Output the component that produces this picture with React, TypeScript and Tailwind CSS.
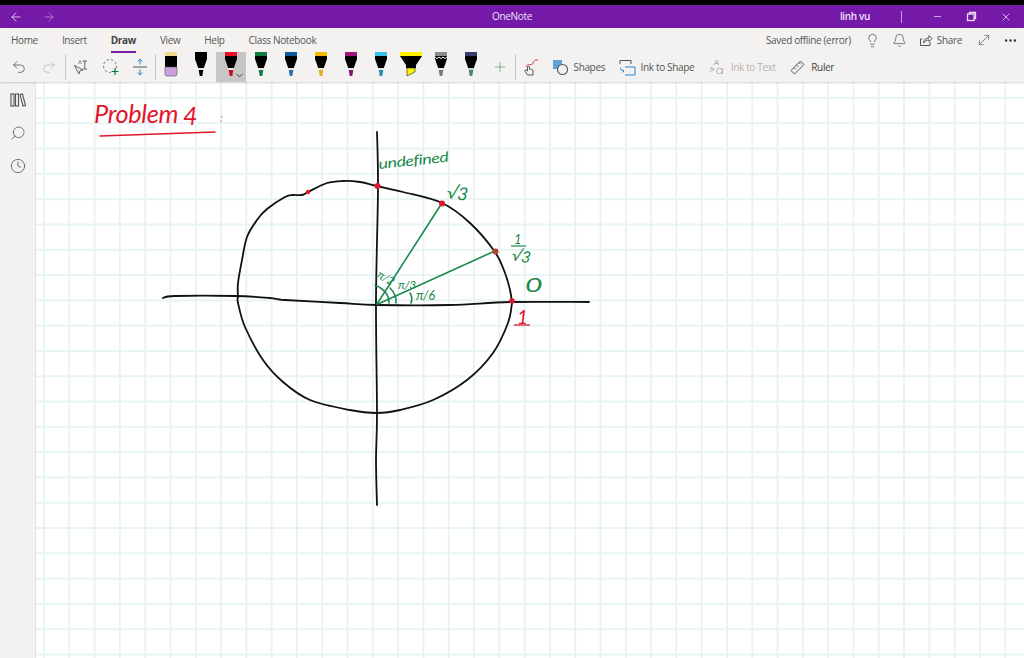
import React from "react";
import { ArrowLeft, ArrowRight, Minus, X, Undo2, Redo2, Lightbulb, Bell, Ellipsis, Plus, Search, Clock, ChevronDown, MoveDiagonal } from "lucide-react";

type PenProps = { cap: string; tip: string; band?: string; wide?: boolean; zig?: boolean; selected?: boolean };

function Pen({ cap, tip, band = "#e8e8e8", wide, zig, selected }: PenProps) {
  return (
    <div className={`relative flex h-[30px] w-[30px] shrink-0 items-start justify-center ${selected ? "bg-[#c8c6c4]" : ""}`}>
      <svg width="26" height="26" viewBox="0 0 26 26">
        {wide ? (
          <>
            <rect x="2" y="0" width="22" height="4" fill={cap} />
            <path d="M2 4h22l-6 9v3H8v-3z" fill="#000" />
            <path d="M9 16h8v4l-8 4z" fill={cap} stroke="#222" strokeWidth="0.6" />
          </>
        ) : (
          <>
            <rect x="7" y="0" width="12" height="4" fill={cap} />
            <path d="M7 4h12v3l-3.2 9h-5.6L7 7z" fill="#000" />
            {zig && <path d="M7 5l2 1.6 2-1.6 2 1.6 2-1.6 2 1.6 2-1.6" fill="none" stroke="#fff" strokeWidth="1" />}
            <path d="M10.2 16h5.6l-.5 2h-4.6z" fill={band} />
            <path d="M10.7 18h4.6l-1 6h-2.6z" fill={tip} />
          </>
        )}
      </svg>
      {selected && <ChevronDown className="absolute bottom-[1px] right-[1px] h-[11px] w-[11px] text-[#333]" strokeWidth={2} />}
    </div>
  );
}

function Eraser() {
  return (
    <div className="flex h-[30px] w-[30px] shrink-0 items-start justify-center">
      <svg width="26" height="26" viewBox="0 0 26 26">
        <rect x="7" y="0" width="12" height="4" fill="#f0d98c" />
        <rect x="7" y="4" width="12" height="11" fill="#000" />
        <path d="M7 15h12v7a2 2 0 0 1-2 2H9a2 2 0 0 1-2-2z" fill="#c9a0dc" stroke="#555" strokeWidth="0.6" />
      </svg>
    </div>
  );
}

function smooth(p: number[][]) {
  let d = `M${p[0][0]} ${p[0][1]}`;
  for (let i = 0; i < p.length - 1; i++) {
    const a = p[Math.max(i - 1, 0)];
    const b = p[i];
    const c = p[i + 1];
    const e = p[Math.min(i + 2, p.length - 1)];
    const c1 = [b[0] + (c[0] - a[0]) / 6, b[1] + (c[1] - a[1]) / 6];
    const c2 = [c[0] - (e[0] - b[0]) / 6, c[1] - (e[1] - b[1]) / 6];
    d += `C${c1[0].toFixed(1)} ${c1[1].toFixed(1)} ${c2[0].toFixed(1)} ${c2[1].toFixed(1)} ${c[0]} ${c[1]}`;
  }
  return d;
}

const circleTop = [[512, 303], [510, 290], [505, 273], [495, 252], [470, 223], [442, 203], [403, 192], [377, 186], [360, 182], [343, 181], [327, 183], [308, 192], [302, 195], [293, 195], [285, 197], [267, 209], [257, 220], [247, 237], [242, 260], [238, 283], [238, 297]];
const circleBottom = [[238, 297], [238, 303], [245, 327], [263, 360], [283, 382], [310, 400], [350, 410], [377, 413], [400, 410], [433, 400], [467, 380], [493, 353], [508, 323], [512, 303]];
const hAxis = [[163, 298], [175, 296], [235, 296], [270, 298], [285, 300], [340, 303], [377, 305], [450, 305], [510, 302], [589, 302]];
const vAxis = [[377, 132], [378, 190], [376, 300], [377, 413], [376, 460], [377, 505]];

function Ink() {
  const green = "#1b8a4b";
  const red = "#e0162b";
  const hand = "font-['Lato',sans-serif] italic";
  return (
    <svg className="absolute left-0 top-0" width="988" height="576" viewBox="36 82 988 576">
      <g fill="none" stroke="#111" strokeWidth="1.8" strokeLinecap="round">
        <path d={smooth(circleTop)} />
        <path d={smooth(circleBottom)} />
        <path d={smooth(hAxis)} />
        <path d={smooth(vAxis)} />
      </g>
      <g fill="none" stroke={green} strokeWidth="1.6" strokeLinecap="round">
        <path d="M377 304L442 203" />
        <path d="M378 304L497 250" />
        <path d="M375 285Q389 291 389 303" />
        <path d="M390 288Q397 295 396 303" />
        <path d="M410 293Q413 298 411 303" />
      </g>
      <g fill={red}>
        <circle cx="377.5" cy="186" r="3" />
        <circle cx="442" cy="203.5" r="3" />
        <circle cx="495.5" cy="251.5" r="3" fill="#b5402f" />
        <circle cx="512" cy="301" r="2.8" />
        <circle cx="308" cy="192" r="2.2" />
      </g>
      <path d="M100 136Q160 134 215 132" fill="none" stroke={red} strokeWidth="1.5" strokeLinecap="round" />
      <path d="M514 325H530" fill="none" stroke={red} strokeWidth="1.3" />

      <text x="94" y="123" textLength="84" lengthAdjust="spacingAndGlyphs" fill={red} fontSize="25" className={hand}>Problem</text>
      <text x="183" y="125" fill={red} fontSize="25" className={hand}>4</text>
      <text x="220" y="122" fill={red} fontSize="12" opacity="0.6" className={hand}>:</text>

      <text x="379" y="169" textLength="70" lengthAdjust="spacingAndGlyphs" fill={green} fontSize="14" transform="rotate(-6 379 169)" className={hand}>undefined</text>
      <text x="446" y="198" fill={green} fontSize="18" transform="rotate(8 446 198)" className={hand}>√3</text>
      <text x="514" y="244" fill={green} fontSize="13" className={hand}>1</text>
      <path d="M511 246H526" fill="none" stroke={green} strokeWidth="1.2" />
      <text x="511" y="260" fill={green} fontSize="16" transform="rotate(10 511 260)" className={hand}>√3</text>
      <text x="525" y="292" fill={green} fontSize="20" textLength="17" lengthAdjust="spacingAndGlyphs" className={hand}>0</text>
      <text x="517" y="324" fill={red} fontSize="19" className={hand}>1</text>
      <text x="376" y="277" fill={green} fontSize="12" className={hand} transform="rotate(30 376 277)">π/2</text>
      <text x="398" y="289" fill={green} fontSize="12" className={hand}>π/3</text>
      <text x="416" y="300" fill={green} fontSize="13" className={hand}>π/6</text>
    </svg>
  );
}

const Sep = () => <div className="h-[26px] w-px shrink-0 bg-[#c8c6c4]" />;

function ToolLabel({ icon, label, className }: { icon: React.ReactNode; label: string; className: string }) {
  return (
    <div className={`flex shrink-0 items-center gap-[4.5px] ${className}`}>
      <span className="flex h-[18px] w-[18px] shrink-0 items-center justify-center">{icon}</span>
      <span>{label}</span>
    </div>
  );
}

export default function App() {
  return (
    <div className="flex h-[658px] w-[1024px] flex-col overflow-hidden bg-white font-['Open_Sans',sans-serif] text-[10px] tracking-[-0.35px] text-[#555]">
      <div className="h-[5px] shrink-0 bg-black" />
      {/* Title bar */}
      <div className="relative flex h-[23px] shrink-0 items-center bg-[#7519a8] text-[#eee0f6]">
        <ArrowLeft className="ml-[9px] h-[14px] w-[14px] text-[#e7d3f2]" strokeWidth={1.5} />
        <ArrowRight className="ml-[19px] h-[14px] w-[14px] text-[#b583d3]" strokeWidth={1.5} />
        <span className="absolute left-0 right-0 text-center text-[10px]">OneNote</span>
        <span className="ml-auto text-[10px] font-semibold">linh vu</span>
        <span className="ml-[31px] h-[12px] w-px bg-[#c69ddd]" />
        <Minus className="ml-[30px] h-[11px] w-[11px]" strokeWidth={1.5} />
        <svg className="ml-[23px]" width="11" height="11" viewBox="0 0 11 11" fill="none" stroke="currentColor" strokeWidth="1.3">
          <rect x="1.5" y="3" width="6.5" height="6.5" />
          <path d="M3.5 3V1.5H9.5V7.5H8" />
        </svg>
        <X className="ml-[23px] mr-[12px] h-[12px] w-[12px]" strokeWidth={1.5} />
      </div>

      {/* Ribbon */}
      <div className="z-10 h-[54px] shrink-0 bg-[#f3f2f1] shadow-[0_1px_2px_rgba(0,0,0,0.18)]">
        <div className="flex h-[24px] items-center gap-[24px] pl-[11px]">
          <span>Home</span>
          <span>Insert</span>
          <span className="relative font-bold text-[#444]">
            Draw
            <span className="absolute -bottom-[5px] left-0 right-0 h-[2px] bg-[#7519a8]" />
          </span>
          <span>View</span>
          <span>Help</span>
          <span>Class Notebook</span>
          <div className="ml-auto flex items-center pr-[6px]">
            <span>Saved offline (error)</span>
            <Lightbulb className="ml-[14px] h-[15px] w-[15px]" strokeWidth={1.2} />
            <Bell className="ml-[12px] h-[15px] w-[15px]" strokeWidth={1.2} />
            <svg className="ml-[12px]" width="14" height="14" viewBox="0 0 14 14" fill="none" stroke="currentColor" strokeWidth="1">
              <path d="M3.5 6H1.5V12.5H11V9" />
              <path d="M4.5 10C4.5 6.5 7 5 10 5V2.5L13 5.5 10 8.5V7C8 7 6 8 4.5 10Z" />
            </svg>
            <span className="ml-[4px]">Share</span>
            <MoveDiagonal className="ml-[14px] h-[16px] w-[16px]" strokeWidth={1} />
            <Ellipsis className="ml-[11px] h-[15px] w-[15px] text-[#333]" strokeWidth={2} />
          </div>
        </div>
        <div className="flex h-[30px] items-center">
          <Undo2 className="ml-[11px] h-[16px] w-[16px] text-[#555]" strokeWidth={1.2} />
          <Redo2 className="ml-[14px] h-[16px] w-[16px] text-[#bbb]" strokeWidth={1.2} />
          <div className="ml-[8px]"><Sep /></div>
          <svg className="ml-[7px]" width="16" height="16" viewBox="0 0 16 16" fill="none" stroke="#666" strokeWidth="1">
            <path d="M1.5 6.5L6 15L7 11.5L10 11L1.5 6.5Z" />
            <path d="M9.5 2H14M9.5 10H14M11.8 2V10" />
            <path d="M5.5 5L7 1.5L8.5 5" strokeWidth="0.7" />
          </svg>
          <svg className="ml-[13px]" width="18" height="18" viewBox="0 0 18 18" fill="none">
            <circle cx="8" cy="8" r="6.5" stroke="#777" strokeWidth="1" strokeDasharray="2.4 2" />
            <path d="M13 10V17M9.5 13.5H16.5" stroke="#107c41" strokeWidth="1.2" />
          </svg>
          <svg className="ml-[13px]" width="14" height="18" viewBox="0 0 14 18" fill="none">
            <path d="M0 9H14" stroke="#777" strokeWidth="1.3" />
            <path d="M7 1V6.5M4.8 3.5L7 1 9.2 3.5M7 11.5V17M4.8 14.5L7 17 9.2 14.5" stroke="#2b88c8" strokeWidth="1" />
          </svg>
          <div className="ml-[8px]"><Sep /></div>
          <Eraser />
          <Pen cap="#000" tip="#000" />
          <Pen cap="#e81123" tip="#c8102e" selected />
          <Pen cap="#107c41" tip="#107c41" />
          <Pen cap="#0b5a9e" tip="#2a6ea8" />
          <Pen cap="#f5b700" tip="#e2b019" />
          <Pen cap="#a4147f" tip="#8a1270" />
          <Pen cap="#3bc0ee" tip="#2a8fb5" />
          <Pen cap="#fff100" tip="#fff100" wide />
          <Pen cap="#8a8d8d" tip="#777" zig />
          <Pen cap="#33406e" tip="#4f7f86" band="#c9d3d6" />
          <Plus className="ml-[6px] h-[16px] w-[16px] text-[#3f9b6b]" strokeWidth={1} />
          <div className="ml-[7px]"><Sep /></div>
          <svg className="ml-[7px]" width="16" height="18" viewBox="0 0 16 18" fill="none">
            <path d="M3 9C5 4 9 9 10 5C10.5 3 12 1.5 15 2" stroke="#d8455a" strokeWidth="1" />
            <path d="M4.5 9V13L3 12C1.5 11.5 1.5 13 2.5 14L4.5 17H10V12.5C10 11.5 8 11 6.5 11V9C6.5 8 4.5 8 4.5 9Z" stroke="#555" strokeWidth="1" />
          </svg>
          <ToolLabel
            className="ml-[12px]"
            label="Shapes"
            icon={
              <svg width="17" height="17" viewBox="0 0 17 17" fill="none">
                <rect x="1" y="1" width="9" height="9" fill="#5ea2dc" />
                <circle cx="10.5" cy="10.5" r="5" fill="#f3f2f1" stroke="#555" strokeWidth="1.1" />
              </svg>
            }
          />
          <ToolLabel
            className="ml-[13px]"
            label="Ink to Shape"
            icon={
              <svg width="17" height="17" viewBox="0 0 17 17" fill="none" strokeWidth="1">
                <path d="M1 5V1.5H12V5" stroke="#555" />
                <path d="M6 8H16V16H6" stroke="#2b88c8" />
                <path d="M5 12C2.5 12 1.5 10.5 1.5 8.5M5 12L3.5 10.5M5 12L3.5 13.5" stroke="#2b88c8" />
              </svg>
            }
          />
          <ToolLabel
            className="ml-[14px] text-[#b3b0ad]"
            label="Ink to Text"
            icon={
              <svg width="17" height="17" viewBox="0 0 17 17" fill="none" stroke="#b3b0ad" strokeWidth="1">
                <path d="M5 6L7.5 1L10 6M6 4.5H9" />
                <path d="M5 10C2.5 10 1.5 11 1.5 13M1 8.5L5 10L3.5 12" />
                <circle cx="10.5" cy="12" r="2.8" />
                <path d="M13.3 9V15" />
              </svg>
            }
          />
          <ToolLabel
            className="ml-[13px] text-[#444]"
            label="Ruler"
            icon={
              <svg width="15" height="15" viewBox="0 0 15 15" fill="none" stroke="#555" strokeWidth="1">
                <path d="M1 10.5L10.5 1L14 4.5L4.5 14Z" />
                <path d="M4 7.5L5.8 9.3M6.5 5L8.3 6.8M9 2.5L10.8 4.3" />
              </svg>
            }
          />
        </div>
      </div>

      <div className="flex min-h-0 flex-1">
        {/* Sidebar */}
        <div className="flex w-[36px] shrink-0 flex-col items-center gap-[17px] border-r border-[#e6e4e2] bg-[#f3f2f1] pt-[10px] text-[#555]">
          <svg width="16" height="16" viewBox="0 0 16 16" fill="none" stroke="#555" strokeWidth="1.1">
            <rect x="1" y="2" width="3" height="12" />
            <rect x="5.5" y="2" width="3" height="12" />
            <path d="M10 2.5L12.5 2L15.5 13.5L13 14Z" />
          </svg>
          <Search className="h-[16px] w-[16px] -scale-x-100" strokeWidth={1.2} />
          <Clock className="h-[16px] w-[16px]" strokeWidth={1.2} />
        </div>
        {/* Page canvas */}
        <div className="relative min-w-0 flex-1 bg-white bg-[linear-gradient(to_right,#e8f3f5_2px,transparent_2px),linear-gradient(to_bottom,#e8f3f5_2px,transparent_2px)] bg-[size:25.3px_25.3px] bg-[position:7px_15px]">
          <Ink />
        </div>
      </div>
    </div>
  );
}
